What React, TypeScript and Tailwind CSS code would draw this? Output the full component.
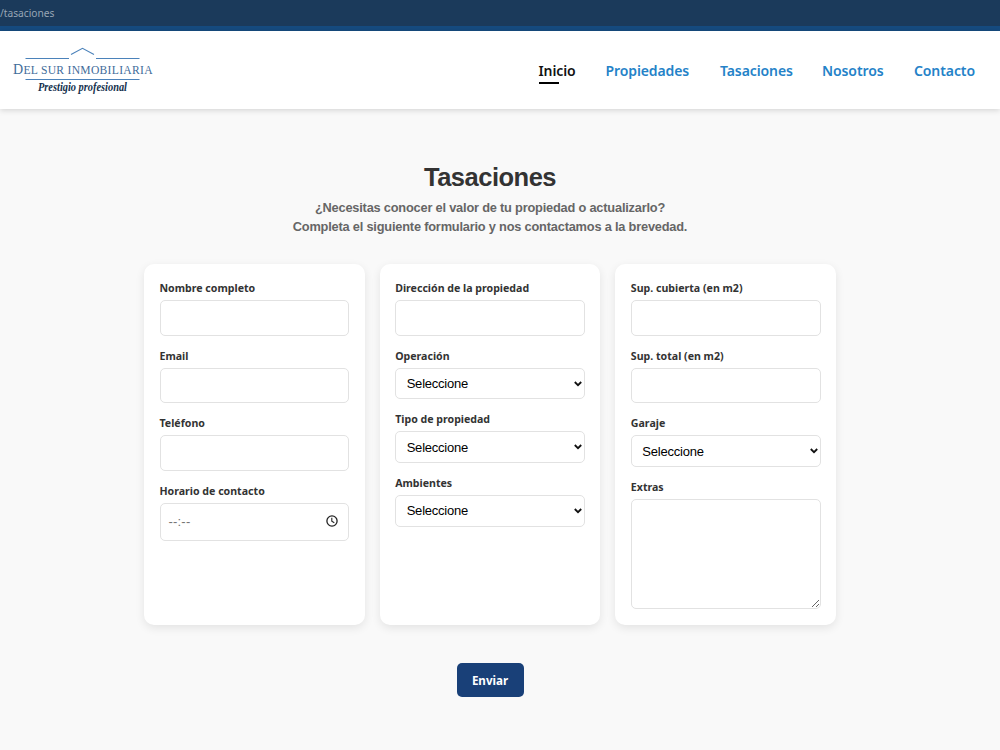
import React from 'react';

const navLinks = [
  { label: 'Inicio', width: 'w-[36px]', active: true },
  { label: 'Propiedades', width: 'w-[83.5px]' },
  { label: 'Tasaciones', width: 'w-[71px]' },
  { label: 'Nosotros', width: 'w-[61px]' },
  { label: 'Contacto', width: 'w-[61px]' },
];

const control =
  'block w-full rounded-[5px] border border-[#e2e2e2] bg-white text-[13px] text-black outline-none';

const Logo: React.FC = () => (
  <svg width="144" height="50" viewBox="0 0 144 50" className="-mt-px block">
    <g fill="none" stroke="#4b82ba" strokeWidth="1.1">
      <path d="M59 8.5 L70.5 2.3 L82 8.5" />
      <path d="M13.5 12.5 H57 M84 12.5 H127.5 M13.5 33.5 H127.5" />
    </g>
    <text
      x="1"
      y="27.5"
      textLength="139.5"
      lengthAdjust="spacing"
      fill="#3f6c9a"
      fontFamily="'Liberation Serif', serif"
      fontSize="14"
    >
      D<tspan fontSize="11.6">EL SUR INMOBILIARIA</tspan>
    </text>
    <text
      x="26"
      y="44.5"
      textLength="89"
      lengthAdjust="spacingAndGlyphs"
      fill="#15304d"
      fontFamily="'Liberation Serif', serif"
      fontSize="13"
      fontStyle="italic"
      fontWeight="bold"
    >
      Prestigio profesional
    </text>
  </svg>
);

interface FieldProps {
  label: string;
  children: React.ReactNode;
}

const Field: React.FC<FieldProps> = ({ label, children }) => (
  <div className="mb-3 last:mb-0">
    <label className="mb-1 block h-4 whitespace-nowrap font-['Noto_Sans','Open_Sans',sans-serif] text-[10.6px] font-bold leading-4 text-[#333]">
      {label}
    </label>
    {children}
  </div>
);

const TextInput: React.FC = () => <input type="text" className={`${control} h-[35.7px] px-2`} />;

const Select: React.FC = () => (
  <div className="relative">
    <select className={`${control} h-[31.8px] appearance-none pl-[10.5px] tracking-[-0.22px]`}>
      <option>Seleccione</option>
    </select>
    <svg
      width="8"
      height="6"
      viewBox="0 0 8 6"
      className="pointer-events-none absolute right-[3px] top-[13px]"
      fill="none"
      stroke="#111"
      strokeWidth="1.8"
    >
      <path d="M0.8 1 L4 4.2 L7.2 1" />
    </svg>
  </div>
);

const TimeInput: React.FC = () => (
  <div className={`${control} flex h-[37.5px] items-center justify-between pl-2 pr-[10.5px]`}>
    <span className="text-[13px] tracking-[0.2px] text-[#757575]">--:--</span>
    <svg width="12" height="12" viewBox="0 0 12 12" className="-mt-px" fill="none" stroke="#222" strokeWidth="1.3">
      <circle cx="6" cy="6" r="5.1" />
      <path d="M5.8 2.8 V6.2 L8.3 7.8" strokeWidth="1.1" />
    </svg>
  </div>
);

const Card: React.FC<{ children: React.ReactNode }> = ({ children }) => (
  <div className="h-[361px] flex-1 rounded-[10px] bg-white px-[15.5px] pt-4 shadow-[0_3px_10px_rgba(0,0,0,0.09)]">
    {children}
  </div>
);

export default function App() {
  return (
    <div className="h-[750px] overflow-hidden bg-[#f9f9f9] font-['Liberation_Sans',Arial,sans-serif]">
      <div className="h-[31px] border-b-[5px] border-[#164b80] bg-[#1b3a5b] font-['Noto_Sans','Open_Sans',sans-serif] text-[10.2px] leading-[26px] text-[#98a6b5]">
        /tasaciones
      </div>
      <header className="flex h-[78px] items-center justify-between bg-white pl-3 pr-[25px] pt-[2px] shadow-[0_1px_6px_rgba(0,0,0,0.17)]">
        <Logo />
        <nav className="flex gap-[31px] font-['Noto_Sans','Open_Sans',sans-serif] text-[14px] font-semibold tracking-[-0.1px]">
          {navLinks.map((link) => (
            <a
              key={link.label}
              href="#"
              className={`relative block whitespace-nowrap leading-6 ${link.width} ${
                link.active ? 'text-[#111]' : 'text-[#2482c8]'
              }`}
            >
              {link.label}
              {link.active && <span className="absolute -bottom-[1px] left-0 h-[2px] w-5 bg-black" />}
            </a>
          ))}
        </nav>
      </header>

      <main className="ml-36 w-[692px] pt-[51px]">
        <h1 className="text-center text-[25.5px] font-bold leading-[34px] tracking-[-0.5px] text-[#333]">
          Tasaciones
        </h1>
        <p className="mt-[5px] text-center text-[12.8px] font-bold leading-[18.5px] tracking-[-0.2px] text-[#666]">
          ¿Necesitas conocer el valor de tu propiedad o actualizarlo?
          <br />
          Completa el siguiente formulario y nos contactamos a la brevedad.
        </p>

        <form>
          <div className="mt-7 flex gap-[15px]">
            <Card>
              <Field label="Nombre completo">
                <TextInput />
              </Field>
              <Field label="Email">
                <TextInput />
              </Field>
              <Field label="Teléfono">
                <TextInput />
              </Field>
              <Field label="Horario de contacto">
                <TimeInput />
              </Field>
            </Card>
            <Card>
              <Field label="Dirección de la propiedad">
                <TextInput />
              </Field>
              <Field label="Operación">
                <Select />
              </Field>
              <Field label="Tipo de propiedad">
                <Select />
              </Field>
              <Field label="Ambientes">
                <Select />
              </Field>
            </Card>
            <Card>
              <Field label="Sup. cubierta (en m2)">
                <TextInput />
              </Field>
              <Field label="Sup. total (en m2)">
                <TextInput />
              </Field>
              <Field label="Garaje">
                <Select />
              </Field>
              <Field label="Extras">
                <textarea className={`${control} h-[110px] resize-y`} />
              </Field>
            </Card>
          </div>
          <button
            type="button"
            className="mx-auto mt-[38px] block h-[34px] w-[67px] rounded-[5px] bg-[#194078] pt-[2px] font-['Noto_Sans','Open_Sans',sans-serif] text-[11.6px] font-bold text-white"
          >
            Enviar
          </button>
        </form>
      </main>
    </div>
  );
}
